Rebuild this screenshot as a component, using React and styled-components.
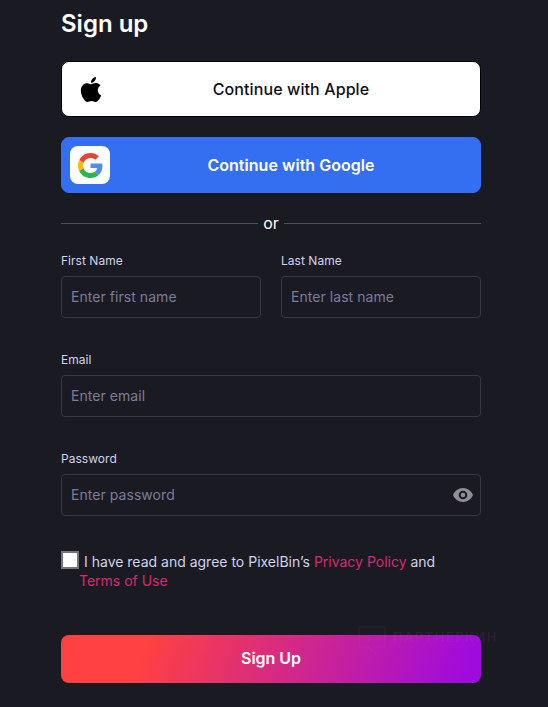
import React from "react";
import styled, { createGlobalStyle } from "styled-components";

const GlobalStyle = createGlobalStyle`
  * { box-sizing: border-box; }
  body {
    margin: 0;
    background: #1a1a23;
    font-family: Inter, "Liberation Sans", sans-serif;
    overflow: hidden;
  }
`;

const Page = styled.main`
  width: 548px;
  height: 707px;
  padding: 9px 67px 0 61px;
  background: #1a1a23;
`;

const Title = styled.h1`
  margin: 0 0 22px;
  font-size: 24px;
  line-height: 30px;
  font-weight: 600;
  color: #fff;
`;

const ProviderButton = styled.button`
  display: flex;
  align-items: center;
  width: 100%;
  height: 56px;
  margin: 0 0 20px;
  padding: 0 8px;
  border: 1px solid ${(p) => (p.$google ? "#346ff1" : "#000")};
  border-radius: 8px;
  background: ${(p) => (p.$google ? "#346ff1" : "#fff")};
  color: ${(p) => (p.$google ? "#fff" : "#101018")};
  font: ${(p) => (p.$google ? 600 : 500)} 16px/24px Inter, sans-serif;
  letter-spacing: ${(p) => (p.$google ? "0.03px" : "0.1px")};
`;

const ProviderIcon = styled.span`
  display: flex;
  align-items: center;
  justify-content: center;
  width: 40px;
  height: 38px;
  padding-left: 1px;
  border-radius: 8px;
  background: #fff;
`;

const ProviderLabel = styled.span`
  flex: 1;
  text-align: center;
`;

const Divider = styled.div`
  display: flex;
  align-items: center;
  height: 20px;
  gap: 5px;
  font-size: 16px;
  font-weight: 400;
  color: #fff;
`;

const Rule = styled.span`
  flex: 1;
  height: 1px;
  background: #4e4e58;
`;

const Fields = styled.div`
  display: grid;
  grid-template-columns: repeat(2, minmax(0, 1fr));
  gap: 33px 20px;
  margin-top: 19px;
`;

const Field = styled.label`
  display: block;
  min-width: 0;
  grid-column: ${(p) => (p.$wide ? "1 / -1" : "auto")};
`;

const FieldLabel = styled.span`
  display: block;
  height: 24px;
  font-size: 12px;
  line-height: 18px;
  letter-spacing: 0.03px;
  color: #cfd3ec;
`;

const InputBox = styled.span`
  display: flex;
  align-items: center;
  height: 42px;
  padding: 0 7px 0 9px;
  border: 1px solid #373742;
  border-radius: 4px;
`;

const Input = styled.input`
  flex: 1;
  width: 0;
  min-width: 0;
  padding: 0;
  border: 0;
  outline: 0;
  background: transparent;
  color: #fff;
  font: 400 14px/20px Inter, sans-serif;
  letter-spacing: 0.05px;
  &::placeholder { color: #7d7b9b; opacity: 1; }
`;

const Agreement = styled.div`
  display: flex;
  margin-top: 35px;
  height: 84px;
`;

const Checkbox = styled.span`
  width: 18px;
  height: 18px;
  border: 2px solid #767676;
  background: #fff;
`;

const Terms = styled.p`
  margin: 1px 0 0;
  font-size: 14px;
  line-height: 19px;
  text-indent: 5px;
  color: #cfd3ec;
`;

const Link = styled.a`
  color: #d42b71;
`;

const SubmitArea = styled.div`
  position: relative;
`;

const Submit = styled.button`
  display: block;
  width: 100%;
  height: 48px;
  padding: 0 0 2px;
  border: 0;
  border-radius: 8px;
  background: linear-gradient(110deg, #ff4141 20%, #9f0bdd 96%);
  color: #fff;
  font: 600 16px/24px Inter, sans-serif;
  letter-spacing: -0.05px;
`;

const Watermark = styled.div`
  position: absolute;
  left: 297px;
  top: -9px;
  display: flex;
  gap: 7px;
  opacity: 0.1;
  color: #8a8a93;
  font-size: 13px;
  line-height: 23px;
  font-weight: 500;
  letter-spacing: 1.5px;
  pointer-events: none;
`;

function AppleMark() {
  return (
    <svg width="22" height="25" viewBox="0 0 814 1000">
      <path d="M788 341c-6 5-108 62-108 190 0 148 130 200 134 202-1 3-21 72-69 142-43 61-87 123-155 123s-85-40-163-40c-76 0-103 41-165 41s-105-57-155-127C49 790 0 663 0 542c0-194 126-297 250-297 66 0 121 43 163 43 39 0 101-46 176-46 29 0 131 3 199 99ZM554 159c31-37 53-88 53-139 0-7 0-14-2-20-50 2-111 34-147 76-28 32-55 83-55 135 0 8 2 16 2 18 3 1 8 1 13 1 46 0 103-30 136-71Z" />
    </svg>
  );
}

function GoogleMark() {
  return (
    <svg width="25" height="25" viewBox="0 0 48 48">
      <path fill="#ea4335" d="M24 9.5c3.5 0 6.7 1.2 9.2 3.6l6.9-6.9C35.9 2.4 30.5 0 24 0 14.6 0 6.5 5.4 2.6 13.2l8 6.2C12.4 13.7 17.7 9.5 24 9.5Z" />
      <path fill="#4f8df5" d="M47 24.6c0-1.6-.2-3.1-.4-4.6H24v9h12.9c-.6 3-2.2 5.5-4.7 7.2l7.7 6C44.4 38 47 31.8 47 24.6Z" />
      <path fill="#fbbc05" d="M10.5 28.6a14.5 14.5 0 0 1 0-9.2l-8-6.2a24 24 0 0 0 0 21.6l8-6.2Z" />
      <path fill="#30b24c" d="M24 48c6.5 0 11.9-2.1 15.9-5.8l-7.7-6c-2.2 1.5-4.9 2.3-8.2 2.3-6.3 0-11.6-4.2-13.5-9.9l-8 6.2C6.5 42.6 14.6 48 24 48Z" />
    </svg>
  );
}

function Eye() {
  return (
    <svg width="20" height="14" viewBox="0 0 20 14">
      <path fill="#8f8f94" fillRule="evenodd" d="M10 0C5.5 0 1.6 2.9 0 7c1.6 4.1 5.5 7 10 7s8.4-2.9 10-7c-1.6-4.1-5.5-7-10-7Zm0 11.3a4.3 4.3 0 1 1 0-8.6 4.3 4.3 0 0 1 0 8.6Zm0-2a2.3 2.3 0 1 0 0-4.6 2.3 2.3 0 0 0 0 4.6Z" />
    </svg>
  );
}

function FormField({ label, placeholder, type = "text", wide, children }) {
  return (
    <Field $wide={wide}>
      <FieldLabel>{label}</FieldLabel>
      <InputBox>
        <Input type={type} placeholder={placeholder} />
        {children}
      </InputBox>
    </Field>
  );
}

export default function App() {
  return (
    <>
      <GlobalStyle />
      <Page>
        <Title>Sign up</Title>
        <ProviderButton>
          <ProviderIcon><AppleMark /></ProviderIcon>
          <ProviderLabel>Continue with Apple</ProviderLabel>
        </ProviderButton>
        <ProviderButton $google>
          <ProviderIcon><GoogleMark /></ProviderIcon>
          <ProviderLabel>Continue with Google</ProviderLabel>
        </ProviderButton>
        <Divider><Rule />or<Rule /></Divider>
        <Fields>
          <FormField label="First Name" placeholder="Enter first name" />
          <FormField label="Last Name" placeholder="Enter last name" />
          <FormField wide label="Email" placeholder="Enter email" />
          <FormField wide label="Password" placeholder="Enter password" type="password"><Eye /></FormField>
        </Fields>
        <Agreement>
          <Checkbox role="checkbox" aria-checked="false" />
          <Terms>
            I have read and agree to PixelBin’s <Link>Privacy Policy</Link> and<br />
            <Link>Terms of Use</Link>
          </Terms>
        </Agreement>
        <SubmitArea>
          <Submit>Sign Up</Submit>
          <Watermark>
            <svg width="28" height="30" viewBox="0 0 28 30" fill="none" stroke="currentColor" strokeWidth="1.2">
              <path d="M1 1h26v20h-9v7l-8-7H1ZM4 11h5q2 0 2 2t-2 2M15 11h5q2 0 2 2t-2 2" />
            </svg>
            ПАРТНЕРКИН
          </Watermark>
        </SubmitArea>
      </Page>
    </>
  );
}
